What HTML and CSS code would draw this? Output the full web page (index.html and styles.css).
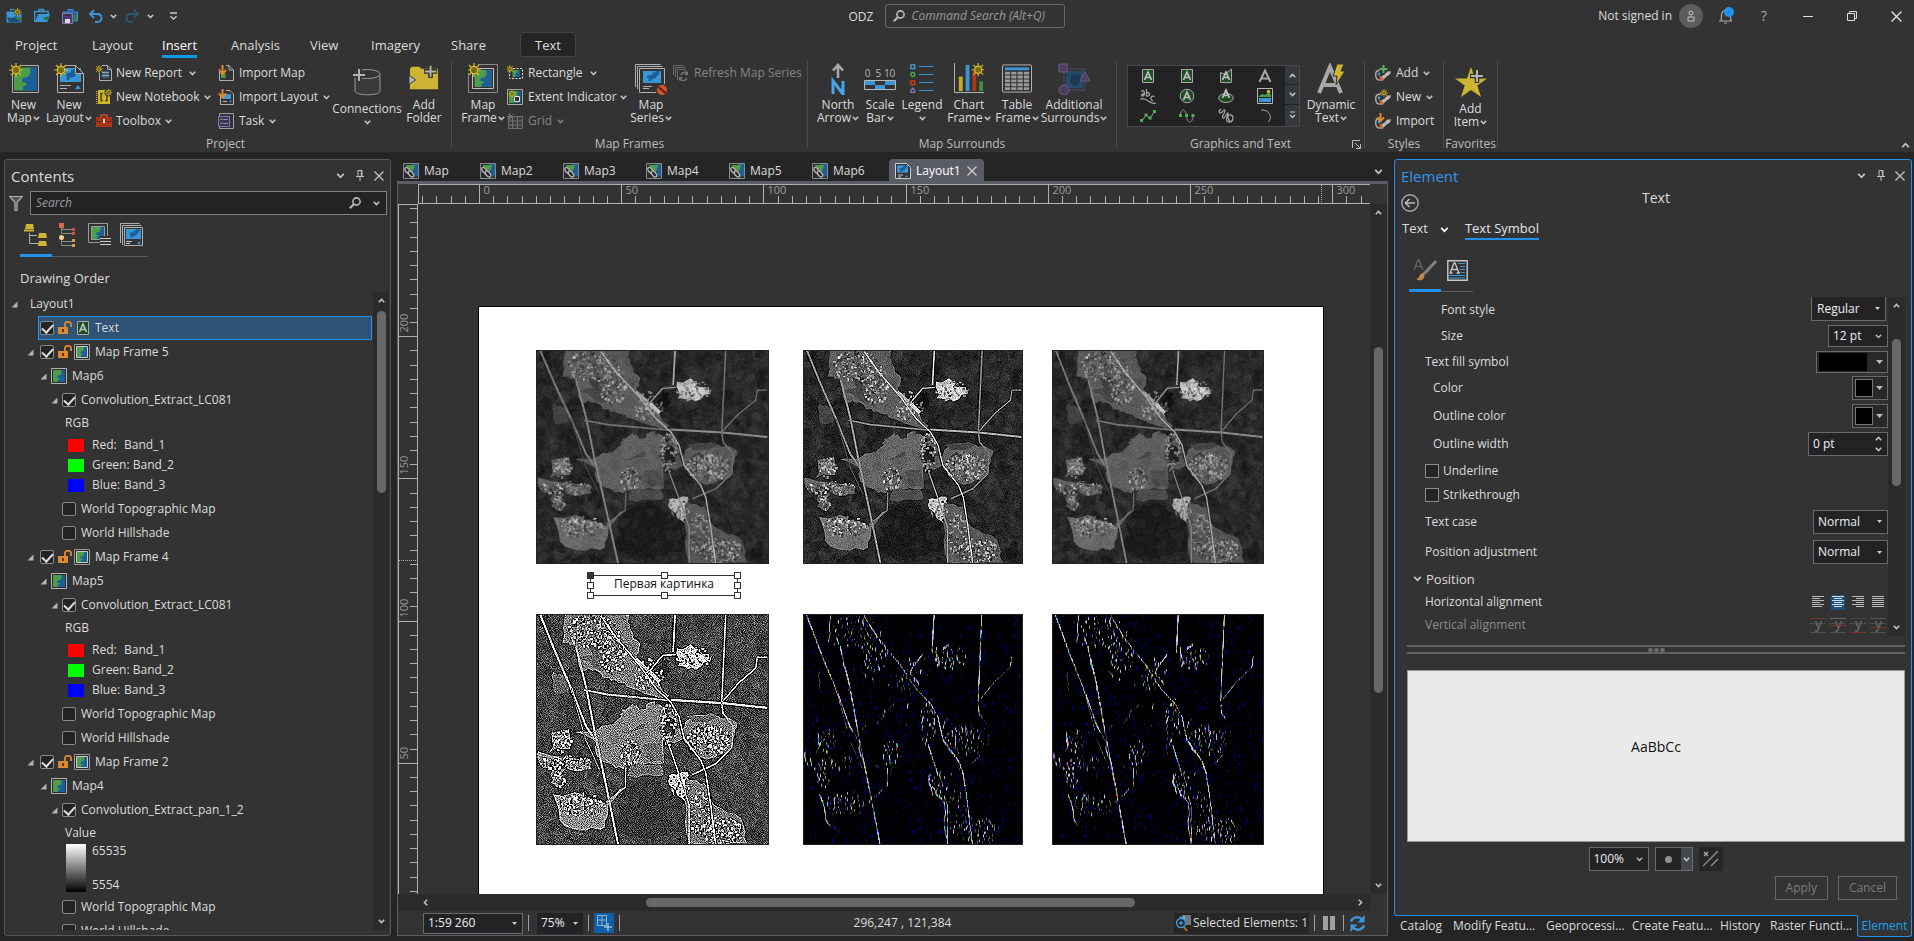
FILE: index.html
```html
<!DOCTYPE html>
<html lang="en">
<head>
<meta charset="utf-8">
<title>ODZ - Layout1</title>
<link rel="stylesheet" href="styles.css">
</head>
<body>
<svg class="defs" aria-hidden="true">
  <symbol id="cv" viewBox="0 0 7 5"><path d="M.8.8 3.5 3.6 6.2.8" fill="none" stroke="currentColor" stroke-width="1.5"/></symbol>
  <symbol id="cv-up" viewBox="0 0 7 5"><path d="M.8 4.2 3.5 1.4 6.2 4.2" fill="none" stroke="currentColor" stroke-width="1.5"/></symbol>
  <symbol id="x" viewBox="0 0 10 10"><path d="M.5.5l9 9M9.500.5l-9 9" fill="none" stroke="currentColor" stroke-width="1.3"/></symbol>
  <symbol id="pin" viewBox="0 0 8 11"><path d="M2 .5h4v6M2 .5v6M0 6.500h8M4 7v4M5.300.5v6" fill="none" stroke="currentColor"/></symbol>
  <symbol id="mag" viewBox="0 0 12 12"><circle cx="7.500" cy="4.500" r="3.600" fill="none" stroke="currentColor" stroke-width="1.600"/><path d="M5 7 .8 11.200" stroke="currentColor" stroke-width="2"/></symbol>
  <symbol id="tri" viewBox="0 0 7 7"><path d="M6.500.5v6h-6z" fill="#b4b4b4"/></symbol>
  <symbol id="sun" viewBox="0 0 14 14"><path d="M7 0v14M0 7h14M2 2l10 10M12 2 2 12" stroke="#d8bc2e" stroke-width="1.200"/><circle cx="7" cy="7" r="3.700" fill="#7d6a10" stroke="#d8bc2e" stroke-width="1.200"/></symbol>
  <symbol id="land" viewBox="0 0 24 24"><path d="M0 0h24v24H0z" fill="#4d9d4b"/><path d="M17 0h7v24H10l-1-4 5-2-3-3-3 1 1-5 6-1 2-4z" fill="#1d5f99"/></symbol>
  <symbol id="sea" viewBox="0 0 24 16"><path d="M0 0h24v16H0z" fill="#3a96d6"/><path d="M13 2h3l1-2h5l-1 5-3 2-1 3-5 1-2 3-3-1 1-4H5l1-3 6-1z" fill="#1d5f99"/></symbol>
  <symbol id="newmap" viewBox="0 0 30 30"><path d="M3.500 2.500h26v27h-26z" fill="#333" stroke="#b0b0b0"/><use href="#land" x="5" y="4" width="23" height="24"/><path d="M3 2h8v8H3z" fill="#333"/><use href="#sun" width="14" height="14"/></symbol>
  <symbol id="newlayout" viewBox="0 0 30 30"><path d="M3.500 2.500h18l8 8v19h-26z" fill="#333" stroke="#b0b0b0"/><use href="#sea" x="6" y="5" width="21" height="14"/><path d="M21.500 2.500v8h8z" fill="#333" stroke="#b0b0b0"/><path d="M6 22.500h11M6 25.500h7" stroke="#b0b0b0"/><path d="m21 26 3-4 3 4z" fill="#3a96d6"/><path d="M3 2h8v8H3z" fill="#333"/><use href="#sun" width="14" height="14"/></symbol>
  <symbol id="mapframe" viewBox="0 0 30 30"><path d="M.5 1.500h29v28H.5z" fill="#333" stroke="#8a8a8a"/><path d="M4.500 5.500h21v20h-21z" fill="#333" stroke="#c0c0c0"/><use href="#land" x="6" y="7" width="18" height="17"/><path d="M0 0h10v10H0z" fill="#333"/><use href="#sun" x="-1" width="14" height="14"/></symbol>
  <symbol id="report" viewBox="0 0 16 16"><path d="M3.500.5h8l4 4v11h-12z" fill="#333" stroke="#b0b0b0"/><path d="M6 6h7v7H6z" fill="#3a5f85"/><path d="M6 7.500h7M6 10.500h7M11.500.5v4h4" stroke="#9ab" fill="none"/><path d="M2 0h4v8H2z" fill="#333"/><use href="#sun" x="-1" y="0" width="8" height="8"/></symbol>
  <symbol id="notebook" viewBox="0 0 16 16"><path d="M2 1h12v14H2z" fill="#d0b42e"/><path d="M7 4.500H5v7h2M9 4.500h2v7H9" fill="none" stroke="#4c4210" stroke-width="1.500"/><path d="M.5 2v13" stroke="#c0a52a" stroke-dasharray="1 1" stroke-width="2"/><circle cx="12.500" cy="3.500" r="4" fill="#333"/><use href="#sun" x="8.500" y="-.5" width="8" height="8"/></symbol>
  <symbol id="toolbox" viewBox="0 0 16 16"><path d="M0 4h16v10H0z" fill="#a83318"/><path d="M5 4V2h6v2" fill="none" stroke="#c0563c" stroke-width="1.400"/><path d="M0 8.500h16" stroke="#732010"/><path d="M7 6h2v4H7z" fill="#ddd"/></symbol>
  <symbol id="impmap" viewBox="0 0 16 16"><path d="M1.500 4v11.500h14V5L11 .5H8" fill="#333" stroke="#b0b0b0"/><path d="M3 8h4l1 5H3z" fill="#4d9d4b"/><path d="M11 .5V5h4" fill="none" stroke="#b0b0b0"/><path d="M4.500 0v8M1 5l3.500 4L8 5" fill="none" stroke="#db8a32" stroke-width="2"/></symbol>
  <symbol id="implay" viewBox="0 0 16 16"><path d="M2.500 7v8.500h13V5L12 1.500H8" fill="#333" stroke="#b0b0b0"/><path d="M5 5h8v5H5z" fill="#3a96d6"/><path d="M5 12.500h4" stroke="#bbb"/><path d="m11 13 1.500-2 1.500 2z" fill="#3a96d6"/><path d="M4.500 0v8M1 4.500 4.500 8.500 8 4.500" fill="none" stroke="#db8a32" stroke-width="2"/></symbol>
  <symbol id="task" viewBox="0 0 16 16"><path d="M1.500 4V.5h14v15h-14V13" fill="none" stroke="#a0a0a0"/><path d="M.5 3.500h11v10H.5z" fill="#3c3350" stroke="#8a73b8"/><path d="M5 6.500h5M5 10.500h5" stroke="#9a86c8"/><path d="m2 6 1 1 1.500-2M2 10l1 1 1.500-2" fill="none" stroke="#4fb04f"/></symbol>
  <symbol id="conn" viewBox="0 0 30 28"><path d="M3 7v16c0 5 25 5 25 0V7" fill="#3a3a3a" stroke="#9a9a9a"/><ellipse cx="15.500" cy="6" rx="12.500" ry="4.500" fill="#333" stroke="#9a9a9a"/><path d="M7 0v14M0 7h14" stroke="#333" stroke-width="5"/><path d="M7 1v12M1 7h12" stroke="#b4b4b4" stroke-width="2"/></symbol>
  <symbol id="folder" viewBox="0 0 32 26"><path d="M1 3l2-2h8l2 2h18v22H1z" fill="#cdb533"/><path d="m0 10 7 5-7 5z" fill="#b4b4b4" stroke="#333"/><path d="M23-1v14M16 6h14" stroke="#333" stroke-width="5"/><path d="M23 0v12M17 6h12" stroke="#b4b4b4" stroke-width="2"/></symbol>
  <symbol id="rect" viewBox="0 0 16 16"><path d="M2.500 3.500h13v10h-13z" fill="none" stroke="#ddd" stroke-dasharray="2 1.500"/><use href="#land" x="5" y="5" width="8" height="7"/><use href="#sun" x="-1" y="0" width="8" height="8"/></symbol>
  <symbol id="extent" viewBox="0 0 16 16"><path d="M.5.500h15v15H.5z" fill="#333" stroke="#a8a8a8"/><use href="#land" x="2" y="2" width="12" height="12"/><path d="M7.500 7.500h5v5h-5z" fill="#333" stroke="#ddd"/><use href="#sun" x="1" y="1" width="8" height="8"/></symbol>
  <symbol id="grid" viewBox="0 0 16 16"><path d="M1.500 3.500h14v12h-14zM1 8h15M1 12h15M5.500 3v13M10.500 3v13" fill="#3c3c3c" stroke="#707070"/><path d="M3 0v7M0 3.500h7M1 1l5 5M6 1 1 6" stroke="#777"/></symbol>
  <symbol id="series" viewBox="0 0 32 32"><path d="M.5 24V1.500h25M2.500 26V3.500h25" fill="none" stroke="#b0b0b0"/><path d="M4.500 5.500h25v24h-25z" fill="#333" stroke="#b0b0b0"/><use href="#sea" x="7" y="8" width="20" height="12"/><path d="M8 23.500h9M8 25.500h6" stroke="#b0b0b0"/><circle cx="27" cy="27" r="6.500" fill="#333"/><circle cx="27" cy="27" r="5" fill="#d4572c"/><path d="m23.500 24 7 6" stroke="#5a1f0c" stroke-width="2"/></symbol>
  <symbol id="refseries" viewBox="0 0 16 16"><path d="M.5 10V.5h10M2.500 12V2.500h10M4.500 15V4.500h8V6" fill="none" stroke="#6a6a6a"/><path d="M14 8a4 4 0 0 0-6 2M7 14a4 4 0 0 0 7-1" fill="none" stroke="#777" stroke-width="1.500"/><path d="M15 6v4h-4zM6 16v-4h4z" fill="#777"/></symbol>
  <symbol id="north" viewBox="0 0 16 32"><path d="M8 2v13M3 7.500 8 2l5 5.500" fill="none" stroke="#a8a8a8" stroke-width="2.600"/><path d="M3 31V18l10 13V18" fill="none" stroke="#45a5e6" stroke-width="3"/></symbol>
  <symbol id="scale" viewBox="0 0 32 30"><path d="M.5 16.500h31v9H.5z" fill="#333" stroke="#b8b8b8"/><path d="M1 17h10v4H1zM21 17h10v4H21zM11 21h10v4H11z" fill="#3a96d6"/></symbol>
  <symbol id="legend" viewBox="0 0 24 30"><path d="M9 3.500h14M9 11.500h14M9 19.500h14M9 27.500h14" stroke="#3a96d6"/><path d="M.8 1.800h3.900v3.900H.8z" fill="none" stroke="#45a5e6" stroke-width="1.300"/><circle cx="2.800" cy="11.500" r="2" fill="none" stroke="#4fb04f" stroke-width="1.300"/><path d="M.8 17.800h3.900v3.900H.8z" fill="#6a2010" stroke="#c8431f" stroke-width="1.300"/><path d="M.8 29.500v-2l2-2.500 2 2.500v2z" fill="none" stroke="#8a73b8" stroke-width="1.300"/></symbol>
  <symbol id="chart" viewBox="0 0 31 31"><path d="M.5 0v30.500H31" fill="none" stroke="#b8b8b8"/><path d="M5 14h4v15H5z" fill="#c8ac28"/><path d="M12 2h4v27h-4z" fill="#3a96d6"/><path d="M19 8h4v21h-4z" fill="#a83a1c"/><path d="M26 19h4v10h-4z" fill="#3f8f3f"/><use href="#sun" x="18" y="0" width="14" height="14"/></symbol>
  <symbol id="table" viewBox="0 0 31 30"><rect x=".5" y="1.500" width="30" height="28" rx="1" fill="#303030" stroke="#b8b8b8"/><path d="M3 4h25v3H3z" fill="#3a96d6"/><path d="M3 10h25M3 14h25M3 18h25M3 22h25M3 26h25" stroke="#999" stroke-width="3" stroke-dasharray="5.400 1.130"/></symbol>
  <symbol id="addl" viewBox="0 0 32 32"><path d="M6 6h21v21H6z" fill="none" stroke="#51476b"/><path d="M8 8h17v17H8z" fill="#264c69"/><path d="m13 12 8-1 3 6-7 6-5-3z" fill="#1b3a54"/><path d="M1 1h8v8H1z" fill="#4a3f60" stroke="#6a5c88"/><path d="m27 9 5 9H22z" fill="#4a3f60" stroke="#6a5c88"/><circle cx="6" cy="27" r="5" fill="#4a3f60" stroke="#6a5c88"/></symbol>
  <symbol id="g1" viewBox="0 0 16 16"><path d="M2.500 1.500h11v13h-11z" fill="#1f4d23" stroke="#a8a8a8"/><path d="M4.500 12 8 4l3.500 8M5.800 9.500h4.400" fill="none" stroke="#c0c0c0" stroke-width="1.700"/></symbol>
  <symbol id="g3" viewBox="0 0 16 16"><path d="M2.500 4.500 6 6l4-2 3.500-3v13.500h-11z" fill="#1f4d23" stroke="#a8a8a8"/><path d="M4.500 12 8 4l3.500 8M5.800 9.500h4.400" fill="none" stroke="#c0c0c0" stroke-width="1.700"/></symbol>
  <symbol id="g4" viewBox="0 0 16 16"><path d="M2.500 14 8 2.500 13.500 14M4.500 10.500h7" fill="none" stroke="#a8a8a8" stroke-width="2"/></symbol>
  <symbol id="g5" viewBox="0 0 16 16"><path d="M1.500 3.500c2-2 3 0 3 2.500-3-.5-4 2-2 2s2-2 2-3M6.500 1v7c4 1 4-4 0-3.500M14.500 8.500c-4-1.500-5 3.500-1.500 4M0 11c5-.5 5 0 8 2s4 2.500 8 2.500" fill="none" stroke="#a8a8a8" stroke-width="1.200"/></symbol>
  <symbol id="g6" viewBox="0 0 16 16"><circle cx="8" cy="8" r="6.800" fill="#1f4d23" stroke="#a8a8a8"/><path d="M4.500 12 8 4l3.500 8M5.800 9.500h4.400" fill="none" stroke="#c0c0c0" stroke-width="1.700"/></symbol>
  <symbol id="g7" viewBox="0 0 16 16"><ellipse cx="8" cy="10" rx="7.300" ry="4.500" fill="#1f4d23" stroke="#a8a8a8"/><path d="M4.500 10 8 2l3.500 8M5.800 7.500h4.400" fill="none" stroke="#c0c0c0" stroke-width="1.700"/></symbol>
  <symbol id="g8" viewBox="0 0 16 16"><path d="M.5.500h15v15H.5z" fill="#232326" stroke="#b8b8b8"/><path d="m2 8 3-2 3 1 4-3 2 3v2H2z" fill="#4d9d4b"/><path d="M2 10h12v4H2z" fill="#3a96d6"/><circle cx="11.500" cy="3.500" r="1.700" fill="#e0b92e"/></symbol>
  <symbol id="g9" viewBox="0 0 16 16"><path d="m2 13 4-6 4 3 5-7" fill="none" stroke="#999"/><path d="M0 11h3v3H0zM4.500 5.500h3v3h-3zM8.500 8.500h3v3h-3zM13 2h3v3h-3z" fill="#4fb04f"/></symbol>
  <symbol id="g10" viewBox="0 0 16 16"><path d="M1 8c1-8 6-8 6.500 0s6 8 6.500 0" fill="none" stroke="#999"/><path d="M0 6h3v3H0zM6 6h3v3H6zM12.500 6h3v3h-3z" fill="#4fb04f"/></symbol>
  <symbol id="g11" viewBox="0 0 16 16"><path d="M3 1C-1 4 2 6 4 4s3-3 3-1-4 6-2 7 4-6 5-5-3 6-1 8 6 1 6-3-5-4-5-1 1 4 4 5" fill="none" stroke="#a8a8a8" stroke-width="1.200"/></symbol>
  <symbol id="g12" viewBox="0 0 16 16"><path d="M4 2c9-1 12 9 7 12" fill="none" stroke="#a8a8a8"/></symbol>
  <symbol id="dyn" viewBox="0 0 30 32"><path d="M3 30 14 4l11 26M7 22h14" fill="none" stroke="#a8a8a8" stroke-width="4"/><path d="M21 1h7l-3 7h4L20 22l1-9h-4z" fill="#cfb42c" stroke="#333"/></symbol>
  <symbol id="palette" viewBox="0 0 16 16"><path d="M6 4C1 4 0 7 1 11s4 3 5 2 0-3 3-3 7-2 6-5" fill="none" stroke="#a8a8a8" stroke-width="1.500"/><path d="m6 14 8-8" stroke="#bbb" stroke-width="3"/><path d="m5 15 3-3" stroke="#c0763a" stroke-width="3"/><circle cx="4" cy="8" r="1.400" fill="#3a96d6"/><circle cx="5" cy="11" r="1.200" fill="#c8431f"/></symbol>
  <symbol id="padd" viewBox="0 0 16 16"><use href="#palette" y="1" width="16" height="16"/><path d="M8.500 0v8M4.500 4h8" stroke="#333" stroke-width="4"/><path d="M8.500 0v8M4.500 4h8" stroke="#58b060" stroke-width="2"/></symbol>
  <symbol id="pnew" viewBox="0 0 16 16"><use href="#palette" y="1" width="16" height="16"/><use href="#sun" x="5" y="0" width="8" height="8"/></symbol>
  <symbol id="pimp" viewBox="0 0 16 16"><use href="#palette" y="1" width="16" height="16"/><path d="M5.500 0v7M2 4.500 5.500 8 9 4.500" fill="none" stroke="#db8a32" stroke-width="2"/></symbol>
  <symbol id="star" viewBox="0 0 32 32"><path d="m16 0 4 11.500h12L22.300 18.500 26 30l-10-7-10 7 3.700-11.500L0 11.500h12z" fill="#cdb533"/><path d="M22 2v14M15 9h14" stroke="#333" stroke-width="4.500"/><path d="M22 3v12M16 9h12" stroke="#b4b4b4" stroke-width="2"/></symbol>
  <symbol id="proj-new" viewBox="0 0 16 16"><path d="M.5 14.500V3.500h15v11z" fill="#3a96d6"/><path d="m1 9 5 1 4-2 5 6H3z" fill="#1d4f7a"/><path d="M4.500 3V1.500h4" fill="none" stroke="#3a96d6"/><path d="M8 9h7v5z" fill="#3f7f42"/><circle cx="11.500" cy="4" r="3.500" fill="#333"/><use href="#sun" x="7.500" y="0" width="8" height="8"/></symbol>
  <symbol id="proj-open" viewBox="0 0 16 16"><path d="M.7 14V3.500h13.500V6M5 3V1.500h4.500V3" fill="none" stroke="#3a96d6" stroke-width="1.400"/><path d="M1 14 4 6h12l-2.500 8z" fill="#3a96d6"/><path d="m9 10 6-2-2 5z" fill="#2d6e38"/></symbol>
  <symbol id="proj-save" viewBox="0 0 16 16"><path d="M1 4h14.500v9H1zM6 3.500v-2h5v2" fill="#1d5f99" stroke="#3a96d6"/><path d="M12 7h3v6h-3z" fill="#3f7f42"/><path d="M.5 5.500h10v10H.5z" fill="#4a3f75" stroke="#8a73b8"/><path d="M3 11h5v4H3z" fill="#ddd"/><path d="M3 6h5v2H3z" fill="#333"/></symbol>
  <symbol id="undo" viewBox="0 0 14 14"><path d="M1 5h7c6 0 6 8 0 8H6M5 1 1 5l4 4" fill="none" stroke="currentColor" stroke-width="1.800"/></symbol>
  <symbol id="chain" viewBox="0 0 16 16"><path d="M.5.500h15v15H.5z" fill="#2a2a2a" stroke="#8a8a8a"/><path d="M9 1h6v12l-3 1z" fill="#1d5f99"/><path d="M2 2h10l-2 7z" fill="#4d9d4b"/><g fill="#2a2a2a" stroke="#b8b8b8" stroke-width="1.300"><ellipse cx="4.500" cy="7.500" rx="2" ry="3.500" transform="rotate(-40 4.500 7.500)"/><ellipse cx="8" cy="11" rx="2" ry="3.500" transform="rotate(-40 8 11)"/></g></symbol>
  <symbol id="laydoc" viewBox="0 0 16 16"><path d="M.5.500h11l4 4v11H.5z" fill="#333" stroke="#ccc"/><use href="#sea" x="2" y="2" width="11" height="8"/><path d="M3 12h5M3 14h3" stroke="#ccc"/><path d="m10 14 1.500-2 1.500 2z" fill="#3a96d6"/></symbol>
  <symbol id="mapi" viewBox="0 0 16 16"><path d="M.5.500h15v15H.5z" fill="#2a2a2a" stroke="#b4b4b4"/><use href="#land" x="2" y="2" width="12" height="12"/></symbol>
  <symbol id="framei" viewBox="0 0 16 16"><path d="M.5.500h15v15H.5z" fill="#2a2a2a" stroke="#9a9a9a"/><path d="M2.500 2.500h11v11h-11z" fill="#333" stroke="#ccc"/><use href="#land" x="3" y="3" width="10" height="10"/></symbol>
  <symbol id="lock" viewBox="0 0 14 14"><path d="M0 6h10v7H0z" fill="#db8a32"/><path d="M7 6V3c0-3 6-3 6 0v3" fill="none" stroke="#db8a32" stroke-width="1.800"/><path d="M4 8h2v3H4z" fill="#5a3408"/></symbol>
  <symbol id="funnel" viewBox="0 0 14 16"><path d="M.8 1.500h12.400L8 7.500V16H6V7.500z" fill="#555" stroke="#b0b0b0" stroke-width="1.200"/></symbol>
  <symbol id="t1" viewBox="0 0 24 24"><path d="M5.500 10v10.500H15M5 12.500h8" fill="none" stroke="#b0b0b0"/><path d="m1 6 1-5h7l1 5zM0 6.500h10v2H0zM14 15l1-5h7l1 5zM14 23l1-5h7l1 5z" fill="#cdb533"/></symbol>
  <symbol id="t2" viewBox="0 0 20 24"><path d="M4 5v1.500h10M3.500 5v5.500H14M3.500 14v4.500H14M3.500 18v4.500H14" fill="none" stroke="#8a8a8a"/><path d="M1 0h5v5H1z" fill="#d9694f"/><path d="M14 5h3v3h-3zM14 9h3v3h-3z" fill="#c8553a"/><circle cx="3.500" cy="14.500" r="2.500" fill="#f0d58a"/><path d="M14 16h3v3h-3zM14 21h3v3h-3z" fill="#d0a050"/></symbol>
  <symbol id="t3" viewBox="0 0 24 24"><path d="M.5.500h19v14M.5.500v19h11" fill="none" stroke="#9a9a9a"/><path d="M3.500 3.500h13v13h-13z" fill="#333" stroke="#9a9a9a"/><use href="#land" x="4" y="4" width="12" height="12"/><path d="M12 13h12v9H12z" fill="#333"/><path d="M12 15.500h11M12 18.500h11M12 21.500h11" stroke="#ccc"/></symbol>
  <symbol id="t4" viewBox="0 0 24 24"><path d="M.5 20V.5h19M2.500 22V2.500h19" fill="none" stroke="#b0b0b0"/><path d="M4.500 4.500h18v18h-18z" fill="#333" stroke="#b0b0b0"/><use href="#sea" x="6" y="6" width="15" height="10"/><path d="M6 18.500h6M6 20.500h4" stroke="#ccc"/><path d="m17 21 2-3 2 3z" fill="#3a96d6"/></symbol>
  <symbol id="brush" viewBox="0 0 24 24"><path d="m1 12 4-10h1l4 10M3 8.500h5" fill="none" stroke="#6a6a6a" stroke-width="1.200"/><path d="M23 3 11 16" stroke="#808080" stroke-width="3"/><path d="M11 15c-5-1-4 6-8 6 4 3 10 1 8-6z" fill="#c0874a"/></symbol>
  <symbol id="atext" viewBox="0 0 21 21"><path d="M.8.800h19.400v19.400H.8z" fill="#333" stroke="#c8c8c8" stroke-width="1.400"/><path d="M3 13 7 3h1l4 10M4.500 9.500h6M2.500 13h3M9.500 13H13" fill="none" stroke="#c8c8c8" stroke-width="1.300"/><path d="M11 3.500h7M13 6.500h5M13 9.500h5M14 12.500h4M2 15.500h16M2 18h16" stroke="#3a96d6"/></symbol>
  <symbol id="al" viewBox="0 0 12 12"><path d="M0 .5h12M0 2.500h8M0 4.500h12M0 6.500h8M0 8.500h12M0 10.500h10" stroke="#b8b8b8"/></symbol>
  <symbol id="ac" viewBox="0 0 12 12"><path d="M0 .5h12M2 2.500h8M0 4.500h12M2 6.500h8M0 8.500h12M2 10.500h8" stroke="#cfe0ee"/></symbol>
  <symbol id="ar" viewBox="0 0 12 12"><path d="M0 .5h12M4 2.500h8M0 4.500h12M4 6.500h8M0 8.500h12M4 10.500h8" stroke="#b8b8b8"/></symbol>
  <symbol id="aj" viewBox="0 0 12 12"><path d="M0 .5h12M0 2.500h12M0 4.500h12M0 6.500h12M0 8.500h12M0 10.500h12" stroke="#b8b8b8"/></symbol>
  <symbol id="va" viewBox="0 0 16 16"><path d="M0 5.500h16" stroke="#666" stroke-dasharray="1 1"/><path d="M0 14.500h16" stroke="#505050"/><path d="m5.500 3 3 7M11.500 3 7.500 13H5" fill="none" stroke="#666" stroke-width="1.500"/></symbol>
  <symbol id="zoomsel" viewBox="0 0 16 16"><path d="M7 0h9v10H7z" fill="#777"/><path d="M9 1v9M5 2l5 3" stroke="#45c5f0" stroke-width="2"/><circle cx="6" cy="8" r="4.500" fill="#2a2a2a" stroke="#3a96d6" stroke-width="1.500"/><path d="M6 6v4M4 8h4" stroke="#3a96d6" stroke-width="1.400"/><path d="m9 12 3 4" stroke="#a8713a" stroke-width="2"/></symbol>
  <symbol id="refresh" viewBox="0 0 18 18"><path d="M2 7a7 7 0 0 1 12-2M16 11a7 7 0 0 1-12 2" fill="none" stroke="#3a96d6" stroke-width="2.600"/><path d="M16.500 0v8H9zM1.500 18v-8H9z" fill="#3a96d6"/></symbol>
</svg>

<header class="titlebar">
  <div class="qat">
    <button aria-label="New project"><svg width="16" height="16"><use href="#proj-new"/></svg></button>
    <button aria-label="Open project"><svg width="16" height="16"><use href="#proj-open"/></svg></button>
    <button aria-label="Save project"><svg width="16" height="16"><use href="#proj-save"/></svg></button>
    <button class="undo" aria-label="Undo"><svg width="14" height="14"><use href="#undo"/></svg></button>
    <button aria-label="Undo list"><svg class="c"><use href="#cv"/></svg></button>
    <button class="redo" aria-label="Redo"><svg width="14" height="14"><use href="#undo"/></svg></button>
    <button aria-label="Redo list"><svg class="c"><use href="#cv"/></svg></button>
    <button aria-label="Customize toolbar"><svg width="9" height="9" viewBox="0 0 9 9"><path d="M1 1h7M1.500 4.200l3 3 3-3" fill="none" stroke="#ccc" stroke-width="1.300"/></svg></button>
  </div>
  <div class="titlemid">
    <span>ODZ</span>
    <label class="cmd"><svg width="12" height="12"><use href="#mag"/></svg><input type="text" placeholder="Command Search (Alt+Q)" aria-label="Command Search"></label>
  </div>
  <div class="account">
    <span>Not signed in</span>
    <button class="avatar" aria-label="Account"><svg width="8" height="12" viewBox="0 0 8 12"><circle cx="4" cy="3" r="2" fill="none" stroke="#c4c4c4"/><path d="M1 11V7h6v4z" fill="none" stroke="#c4c4c4"/></svg></button>
    <button class="bell" aria-label="Notifications"><svg width="16" height="18" viewBox="0 0 16 18"><path d="M1 14h13M3 14c1-4-1-10 5-11s4 7 5 11M6 16h3" fill="none" stroke="#aaa" stroke-width="1.200"/><circle cx="11" cy="5" r="5" fill="#2490ee"/></svg></button>
    <button class="help" aria-label="Help">?</button>
    <button aria-label="Minimize"><svg width="10" height="10" viewBox="0 0 10 10"><path d="M0 5.500h10" stroke="#ddd"/></svg></button>
    <button aria-label="Restore"><svg width="10" height="10" viewBox="0 0 10 10"><path d="M.5 2.500h7v7h-7zM2.500 2V.500h7v7H8" fill="none" stroke="#ddd"/></svg></button>
    <button aria-label="Close"><svg width="11" height="11"><use href="#x"/></svg></button>
  </div>
</header>

<nav class="tabs">
  <a href="#">Project</a><a href="#">Layout</a><a href="#" class="on">Insert</a><a href="#">Analysis</a><a href="#">View</a><a href="#">Imagery</a><a href="#">Share</a><a href="#" class="ctx">Text</a>
</nav>

<section class="ribbon">
  <div class="group">
    <div class="tools g-project">
      <button class="big"><svg><use href="#newmap"/></svg><span>New<br>Map<svg class="c"><use href="#cv"/></svg></span></button>
      <button class="big"><svg><use href="#newlayout"/></svg><span>New<br>Layout<svg class="c"><use href="#cv"/></svg></span></button>
      <div class="stack inset">
        <button><svg class="s"><use href="#report"/></svg>New Report<svg class="c far"><use href="#cv"/></svg></button>
        <button><svg class="s"><use href="#notebook"/></svg>New Notebook<svg class="c"><use href="#cv"/></svg></button>
        <button><svg class="s"><use href="#toolbox"/></svg>Toolbox<svg class="c"><use href="#cv"/></svg></button>
      </div>
      <div class="stack">
        <button><svg class="s"><use href="#impmap"/></svg>Import Map</button>
        <button><svg class="s"><use href="#implay"/></svg>Import Layout<svg class="c"><use href="#cv"/></svg></button>
        <button><svg class="s"><use href="#task"/></svg>Task<svg class="c"><use href="#cv"/></svg></button>
      </div>
      <button class="big low"><svg><use href="#conn"/></svg><span>Connections<br><svg class="c"><use href="#cv"/></svg></span></button>
      <button class="big"><svg><use href="#folder"/></svg><span>Add<br>Folder</span></button>
    </div>
    <div class="caption">Project</div>
  </div>
  <div class="group">
    <div class="tools g-frames">
      <button class="big"><svg><use href="#mapframe"/></svg><span>Map<br>Frame<svg class="c"><use href="#cv"/></svg></span></button>
      <div class="stack">
        <button><svg class="s"><use href="#rect"/></svg>Rectangle<svg class="c far"><use href="#cv"/></svg></button>
        <button><svg class="s"><use href="#extent"/></svg>Extent Indicator<svg class="c near"><use href="#cv"/></svg></button>
        <button class="off"><svg class="s"><use href="#grid"/></svg>Grid<svg class="c"><use href="#cv"/></svg></button>
      </div>
      <button class="big"><svg class="w32"><use href="#series"/></svg><span>Map<br>Series<svg class="c"><use href="#cv"/></svg></span></button>
      <div class="stack"><button class="off"><svg class="s"><use href="#refseries"/></svg>Refresh Map Series</button></div>
    </div>
    <div class="caption">Map Frames</div>
  </div>
  <div class="group">
    <div class="tools g-surrounds">
      <button class="big"><svg class="w32"><use href="#north"/></svg><span>North<br>Arrow<svg class="c"><use href="#cv"/></svg></span></button>
      <button class="big scalebar"><i>0&nbsp; 5 10</i><svg class="w32"><use href="#scale"/></svg><span>Scale<br>Bar<svg class="c"><use href="#cv"/></svg></span></button>
      <button class="big"><svg><use href="#legend"/></svg><span>Legend<br><svg class="c"><use href="#cv"/></svg></span></button>
      <button class="big"><svg><use href="#chart"/></svg><span>Chart<br>Frame<svg class="c"><use href="#cv"/></svg></span></button>
      <button class="big"><svg><use href="#table"/></svg><span>Table<br>Frame<svg class="c"><use href="#cv"/></svg></span></button>
      <button class="big"><svg class="w32"><use href="#addl"/></svg><span>Additional<br>Surrounds<svg class="c"><use href="#cv"/></svg></span></button>
    </div>
    <div class="caption">Map Surrounds</div>
  </div>
  <div class="group">
    <div class="tools g-graphics">
      <div class="gallery">
        <div class="cells">
          <button aria-label="Rectangle text"><svg class="s"><use href="#g1"/></svg></button><button aria-label="Rectangle text 2"><svg class="s"><use href="#g1"/></svg></button><button aria-label="Polygon text"><svg class="s"><use href="#g3"/></svg></button><button aria-label="Straight text"><svg class="s"><use href="#g4"/></svg></button>
          <button aria-label="Curved text"><svg class="s"><use href="#g5"/></svg></button><button aria-label="Circle text"><svg class="s"><use href="#g6"/></svg></button><button aria-label="Ellipse text"><svg class="s"><use href="#g7"/></svg></button><button aria-label="Picture"><svg class="s"><use href="#g8"/></svg></button>
          <button aria-label="Line"><svg class="s"><use href="#g9"/></svg></button><button aria-label="Curve"><svg class="s"><use href="#g10"/></svg></button><button aria-label="Freehand"><svg class="s"><use href="#g11"/></svg></button><button aria-label="Arc"><svg class="s"><use href="#g12"/></svg></button>
        </div>
        <div class="gscroll">
          <button aria-label="Up"><svg class="c"><use href="#cv-up"/></svg></button>
          <button aria-label="Down"><svg class="c"><use href="#cv"/></svg></button>
          <button aria-label="More"><svg width="7" height="8" viewBox="0 0 7 8"><path d="M1 1h5M1 4l2.500 2.500L6 4" fill="none" stroke="#ccc" stroke-width="1.200"/></svg></button>
        </div>
      </div>
      <button class="big"><svg class="w32"><use href="#dyn"/></svg><span>Dynamic<br>Text<svg class="c"><use href="#cv"/></svg></span></button>
    </div>
    <div class="caption">Graphics and Text<button class="launch" aria-label="Options"><svg width="9" height="9" viewBox="0 0 9 9"><path d="M.5 8V.5H8M3 3l5 5M8.500 4v4.500H4" fill="none" stroke="#bbb"/></svg></button></div>
  </div>
  <div class="group">
    <div class="tools g-styles">
      <div class="stack">
        <button><svg class="s"><use href="#padd"/></svg>Add<svg class="c"><use href="#cv"/></svg></button>
        <button><svg class="s"><use href="#pnew"/></svg>New<svg class="c"><use href="#cv"/></svg></button>
        <button><svg class="s"><use href="#pimp"/></svg>Import</button>
      </div>
    </div>
    <div class="caption">Styles</div>
  </div>
  <div class="group">
    <div class="tools g-fav">
      <button class="big low"><svg class="w32"><use href="#star"/></svg><span>Add<br>Item<svg class="c"><use href="#cv"/></svg></span></button>
    </div>
    <div class="caption">Favorites</div>
  </div>
  <button class="collapse" aria-label="Collapse ribbon"><svg class="c"><use href="#cv-up"/></svg></button>
</section>

<main class="work">
  <aside class="panel contents">
    <div class="phead"><h2>Contents</h2><button aria-label="Menu"><svg class="c"><use href="#cv"/></svg></button><button aria-label="Pin"><svg width="8" height="11"><use href="#pin"/></svg></button><button aria-label="Close"><svg width="10" height="10"><use href="#x"/></svg></button></div>
    <div class="filter">
      <svg width="14" height="16"><use href="#funnel"/></svg>
      <label class="find"><input type="text" placeholder="Search" aria-label="Search"><svg width="12" height="12"><use href="#mag"/></svg><svg class="c"><use href="#cv"/></svg></label>
    </div>
    <div class="views">
      <button class="on" aria-label="List by drawing order"><svg width="24" height="24"><use href="#t1"/></svg></button><button aria-label="List by element type"><svg width="20" height="24"><use href="#t2"/></svg></button><button aria-label="List by map frame"><svg width="24" height="24"><use href="#t3"/></svg></button><button aria-label="List map series"><svg width="24" height="24"><use href="#t4"/></svg></button>
    </div>
    <h3>Drawing Order</h3>
    <div class="treebox">
      <div class="tree">
        <div class="row l0"><svg class="t"><use href="#tri"/></svg><span>Layout1</span></div>
        <label class="row l1 sel"><input type="checkbox" checked><svg class="k"><use href="#lock"/></svg><svg class="s"><use href="#g1"/></svg><span>Text</span></label>
        <label class="row l2"><svg class="t"><use href="#tri"/></svg><input type="checkbox" checked><svg class="k"><use href="#lock"/></svg><svg class="s"><use href="#framei"/></svg><span>Map Frame 5</span></label>
        <div class="row l3"><svg class="t"><use href="#tri"/></svg><svg class="s"><use href="#mapi"/></svg><span>Map6</span></div>
        <label class="row l4"><svg class="t"><use href="#tri"/></svg><input type="checkbox" checked><span>Convolution_Extract_LC081</span></label>
        <div class="row l5">RGB</div>
        <div class="bands"><i class="r"></i><span>Red:</span><span>Band_1</span><i class="g"></i><span>Green: Band_2</span><i class="b"></i><span>Blue:</span><span>Band_3</span></div>
        <label class="row l6"><input type="checkbox"><span>World Topographic Map</span></label>
        <label class="row l6"><input type="checkbox"><span>World Hillshade</span></label>
        <label class="row l2"><svg class="t"><use href="#tri"/></svg><input type="checkbox" checked><svg class="k"><use href="#lock"/></svg><svg class="s"><use href="#framei"/></svg><span>Map Frame 4</span></label>
        <div class="row l3"><svg class="t"><use href="#tri"/></svg><svg class="s"><use href="#mapi"/></svg><span>Map5</span></div>
        <label class="row l4"><svg class="t"><use href="#tri"/></svg><input type="checkbox" checked><span>Convolution_Extract_LC081</span></label>
        <div class="row l5">RGB</div>
        <div class="bands"><i class="r"></i><span>Red:</span><span>Band_1</span><i class="g"></i><span>Green: Band_2</span><i class="b"></i><span>Blue:</span><span>Band_3</span></div>
        <label class="row l6"><input type="checkbox"><span>World Topographic Map</span></label>
        <label class="row l6"><input type="checkbox"><span>World Hillshade</span></label>
        <label class="row l2"><svg class="t"><use href="#tri"/></svg><input type="checkbox" checked><svg class="k"><use href="#lock"/></svg><svg class="s"><use href="#framei"/></svg><span>Map Frame 2</span></label>
        <div class="row l3"><svg class="t"><use href="#tri"/></svg><svg class="s"><use href="#mapi"/></svg><span>Map4</span></div>
        <label class="row l4"><svg class="t"><use href="#tri"/></svg><input type="checkbox" checked><span>Convolution_Extract_pan_1_2</span></label>
        <div class="row l5">Value</div>
        <div class="ramp"><i></i><div><span>65535</span><span>5554</span></div></div>
        <label class="row l6"><input type="checkbox"><span>World Topographic Map</span></label>
        <label class="row l6"><input type="checkbox"><span>World Hillshade</span></label>
      </div>
      <div class="vbar"><svg class="c"><use href="#cv-up"/></svg><b class="thumb-tree"></b><svg class="c end"><use href="#cv"/></svg></div>
    </div>
  </aside>

  <section class="doc">
    <div class="doctabs">
      <a href="#" class="first"><svg class="s"><use href="#chain"/></svg>Map</a><a href="#"><svg class="s"><use href="#chain"/></svg>Map2</a><a href="#"><svg class="s"><use href="#chain"/></svg>Map3</a><a href="#"><svg class="s"><use href="#chain"/></svg>Map4</a><a href="#"><svg class="s"><use href="#chain"/></svg>Map5</a><a href="#"><svg class="s"><use href="#chain"/></svg>Map6</a><a href="#" class="on"><svg class="s"><use href="#laydoc"/></svg>Layout1<svg width="10" height="10"><use href="#x"/></svg></a>
      <button aria-label="All views"><svg class="c"><use href="#cv"/></svg></button>
    </div>
    <div class="docbody">
      <div class="corner"></div>
      <svg class="hruler" id="hruler"></svg>
      <div class="cornerr"></div>
      <svg class="vruler" id="vruler"></svg>
      <div class="view">
        <div class="page">
          <canvas class="f1" width="233" height="214"></canvas>
          <canvas class="f2" width="220" height="214"></canvas>
          <canvas class="f3" width="212" height="214"></canvas>
          <canvas class="f4" width="233" height="231"></canvas>
          <canvas class="f5" width="220" height="231"></canvas>
          <canvas class="f6" width="212" height="231"></canvas>
          <div class="textel">Первая картинка<i class="h nw"></i><i class="h n"></i><i class="h ne"></i><i class="h w"></i><i class="h e"></i><i class="h sw"></i><i class="h so"></i><i class="h se"></i></div>
        </div>
      </div>
      <div class="vbar"><svg class="c"><use href="#cv-up"/></svg><b class="thumb-view"></b><svg class="c end"><use href="#cv"/></svg></div>
      <div class="hbar"><svg class="c left"><use href="#cv"/></svg><b></b><svg class="c right"><use href="#cv"/></svg></div>
    </div>
    <div class="status">
      <select class="scale" aria-label="Scale"><option>1:59 260</option></select><i class="bar"></i>
      <select class="zoom" aria-label="Zoom"><option>75%</option></select><i class="bar"></i>
      <button class="guides" aria-label="Guides"><svg width="16" height="18" viewBox="0 0 16 18"><path d="M1.500 1.500h9v10h-9zM6 1v10M1 6h9" fill="none" stroke="#8fb3d0"/><path d="M12 9v8M8 13h8" stroke="#d4e4f2"/></svg></button><i class="bar"></i>
      <span class="coord">296,247 , 121,384</span>
      <span class="selcount"><svg class="s"><use href="#zoomsel"/></svg>Selected Elements: 1</span><i class="bar"></i>
      <button class="pause" aria-label="Pause"><svg width="12" height="14" viewBox="0 0 12 14"><path d="M0 0h5v14H0zM7 0h5v14H7z" fill="#a0a0a0"/></svg></button><i class="bar"></i>
      <button aria-label="Refresh"><svg width="17" height="17"><use href="#refresh"/></svg></button>
    </div>
  </section>

  <section class="side">
    <div class="panel element">
      <div class="phead"><h2>Element</h2><button aria-label="Menu"><svg class="c"><use href="#cv"/></svg></button><button aria-label="Pin"><svg width="8" height="11"><use href="#pin"/></svg></button><button aria-label="Close"><svg width="10" height="10"><use href="#x"/></svg></button></div>
      <div class="titlerow"><button aria-label="Back"><svg width="18" height="18" viewBox="0 0 18 18"><circle cx="9" cy="9" r="8.200" fill="none" stroke="#a8a8a8" stroke-width="1.400"/><path d="M14 9H5M8.500 5 4.500 9l4 4" fill="none" stroke="#b8b8b8" stroke-width="1.600"/></svg></button><h3>Text</h3></div>
      <div class="subtabs"><a href="#">Text</a><svg class="c"><use href="#cv"/></svg><a href="#" class="on">Text Symbol</a></div>
      <div class="views two"><button class="on" aria-label="General"><svg width="24" height="24"><use href="#brush"/></svg></button><button aria-label="Formatting"><svg width="21" height="21"><use href="#atext"/></svg></button></div>
      <div class="propbox">
        <div class="props">
          <div class="p h25 in3"><label for="fs">Font style</label><select id="fs" class="dd cut"><option>Regular</option></select></div>
          <div class="p h28 in3"><label for="sz">Size</label><select id="sz" class="dd size"><option>12 pt</option></select></div>
          <div class="p h24 in1"><span>Text fill symbol</span><button class="fill" aria-label="Text fill symbol"><b></b></button></div>
          <div class="p h28 in2"><span>Color</span><button class="color" aria-label="Color"><b></b></button></div>
          <div class="p h28 in2"><span>Outline color</span><button class="color" aria-label="Outline color"><b></b></button></div>
          <div class="p h28 in2"><label for="ow">Outline width</label><div class="spin"><input id="ow" type="text" value="0 pt"><div><svg class="c"><use href="#cv-up"/></svg><svg class="c"><use href="#cv"/></svg></div></div></div>
          <div class="p h25 in1"><label class="chk"><input type="checkbox">Underline</label></div>
          <div class="p h23 in1"><label class="chk"><input type="checkbox">Strikethrough</label></div>
          <div class="p h31 in1"><label for="tc">Text case</label><select id="tc" class="dd"><option>Normal</option></select></div>
          <div class="p h30 in1"><label for="pa">Position adjustment</label><select id="pa" class="dd"><option>Normal</option></select></div>
          <div class="p h23 sec"><svg class="c"><use href="#cv"/></svg><span>Position</span></div>
          <div class="p h24 in1"><span>Horizontal alignment</span><div class="al"><button aria-label="Left"><svg><use href="#al"/></svg></button><button class="on" aria-label="Center"><svg><use href="#ac"/></svg></button><button aria-label="Right"><svg><use href="#ar"/></svg></button><button aria-label="Justify"><svg><use href="#aj"/></svg></button></div></div>
          <div class="p h22 in1 dim"><span>Vertical alignment</span><div class="al va"><button disabled aria-label="Top"><svg viewBox="0 0 16 16"><use href="#va"/><path d="M0 .5h16" stroke="#7a3428"/></svg></button><button disabled aria-label="Middle"><svg viewBox="0 0 16 16"><use href="#va"/><path d="M0 .5h16" stroke="#666"/><path d="M0 7.500h16" stroke="#7a3428"/></svg></button><button disabled aria-label="Baseline"><svg viewBox="0 0 16 16"><use href="#va"/><path d="M0 .5h16" stroke="#444"/><path d="M0 14.500h16" stroke="#7a3428"/></svg></button><button disabled aria-label="Bottom"><svg viewBox="0 0 16 16"><use href="#va"/><path d="M0 .5h16" stroke="#555"/><path d="M0 9.500h16" stroke="#7a3428"/></svg></button></div></div>
        </div>
        <div class="vbar"><svg class="c"><use href="#cv-up"/></svg><b class="thumb-props"></b><svg class="c end"><use href="#cv"/></svg></div>
      </div>
      <div class="splitter"><i></i><i></i><i></i></div>
      <div class="preview">AaBbCc</div>
      <div class="ptools">
        <select class="dd pct" aria-label="Preview zoom"><option>100%</option></select>
        <button class="dot" aria-label="Preview shape"><i></i><span><svg class="c"><use href="#cv"/></svg></span></button>
        <button class="eye" aria-label="Variables"><svg width="16" height="16" viewBox="0 0 16 16"><path d="M0 15 15 0M8 15l7-7" stroke="#999" stroke-width="1.200"/><path d="m1 1 4 4m0-4L1 5" stroke="#aaa" stroke-width="1.300"/></svg></button>
      </div>
      <div class="actions"><button disabled>Apply</button><button disabled>Cancel</button></div>
    </div>
    <nav class="dock"><a href="#">Catalog</a><a href="#">Modify Featu...</a><a href="#">Geoprocessi...</a><a href="#">Create Featu...</a><a href="#">History</a><a href="#">Raster Functi...</a><a href="#" class="on">Element</a></nav>
  </section>
</main>
<script src="app.js"></script>
</body>
</html>
```
FILE: styles.css
```css
:root {
  --bg: #333333;
  --dark: #252525;
  --field: #232326;
  --line: #6a6a6a;
  --blue: #2490ee;
  --text: #dcdcdc;
  --down: url("data:image/svg+xml,%3Csvg xmlns='http://www.w3.org/2000/svg' width='7' height='5'%3E%3Cpath d='M.8.8 3.5 3.6 6.2.8' fill='none' stroke='%23bbb' stroke-width='1.4'/%3E%3C/svg%3E");
  --drop: url("data:image/svg+xml,%3Csvg xmlns='http://www.w3.org/2000/svg' width='7' height='4'%3E%3Cpath d='M0 0h7L3.500 4z' fill='%23bbb'/%3E%3C/svg%3E");
  --dropsmall: url("data:image/svg+xml,%3Csvg xmlns='http://www.w3.org/2000/svg' width='5' height='3'%3E%3Cpath d='M0 0h5L2.500 3z' fill='%23ccc'/%3E%3C/svg%3E");
}
* { box-sizing: border-box; }
html, body { height: 100%; }
body {
  margin: 0;
  display: flex;
  flex-direction: column;
  background: var(--dark);
  color: var(--text);
  font: 12px/16px "Open Sans", "Noto Sans", sans-serif;
  overflow: hidden;
}
button, input, select { font: inherit; color: inherit; margin: 0; }
button { background: none; border: 0; padding: 0; display: flex; align-items: center; justify-content: center; white-space: nowrap; }
a { color: inherit; text-decoration: none; white-space: nowrap; }
h2, h3 { margin: 0; font-weight: 400; }
svg { display: block; flex: none; }
.defs { position: absolute; width: 0; height: 0; }
.c { width: 7px; height: 5px; color: #c4c4c4; }
.s { width: 16px; height: 16px; }
select { appearance: none; border: 1px solid var(--line); background: var(--field) var(--dropsmall) no-repeat right 5px center; border-radius: 0; padding: 0 4px; color: #eee; }

.titlebar { height: 32px; display: grid; grid-template-columns: 1fr auto 1fr; background: var(--bg); }
.qat { display: grid; grid-template-columns: 28px 28px 28px 23px 13px 24px 13px 32px; justify-content: start; }
.undo { color: #3a96d6; }
.redo { color: #2c5672; }
.redo svg { transform: scaleX(-1); }
.titlemid { display: flex; align-items: flex-start; gap: 12px; padding: 4px 0 0 0; }
.titlemid span { line-height: 25px; }
.cmd { display: flex; align-items: center; gap: 6px; width: 180px; height: 24px; padding-left: 7px; border: 1px solid #666; border-radius: 3px; color: #bbb; }
.cmd input { flex: 1; min-width: 0; padding: 0; border: 0; background: none; font-style: italic; }
input::placeholder { color: #9a9a9a; opacity: 1; }
.account { display: flex; justify-content: flex-end; align-items: center; }
.account > span { margin-right: 7px; }
.account button { width: 44px; height: 24px; }
.account .avatar { width: 24px; height: 24px; border-radius: 12px; background: #5c5c5c; margin-right: 7px; }
.account .bell { width: 32px; }
.account .help { font-size: 14px; color: #aaa; }
.account button:last-child { margin-right: -4px; }

.tabs { height: 29px; display: grid; grid-template-columns: 77px 70px 69px 79px 61px 80px 69px auto; justify-content: start; padding-left: 15px; background: var(--bg); font-size: 13px; line-height: 26px; }
.tabs a { justify-self: start; height: 26px; }
.tabs .on { border-bottom: 3px solid #0e9bea; color: #fff; }
.tabs .ctx { width: 56px; height: 25px; line-height: 24px; border: 1px solid #444; border-radius: 3px; background: #252525; text-align: center; }

.ribbon { height: 91px; flex: none; display: flex; background: var(--bg); }
.group { display: flex; flex-direction: column; padding-right: 1px; background: linear-gradient(#4c4c4c, #4c4c4c) no-repeat right top / 1px 87px; }
.tools { flex: 1; display: grid; align-items: start; }
.g-project { grid-template-columns: 47px 44px 127px 115px 68px 46px; padding-right: 4px; }
.g-frames { grid-template-columns: 48px 122px 44px 130px; padding: 0 4px 0 7px; }
.g-surrounds { grid-template-columns: 44px 40px 44px 50px 46px 68px; padding: 0 8px 0 8px; }
.g-graphics { grid-template-columns: 173px 1fr; padding: 0 2px 0 10px; width: 247px; }
.g-styles { width: 78px; padding-left: 10px; }
.g-fav { width: 53px; }
.caption { position: relative; height: 16px; text-align: center; color: #bdbdbd; line-height: 16px; }
.launch { position: absolute; right: 3px; top: 4px; }
.stack { display: grid; grid-auto-rows: 24px; }
.inset { padding-left: 5px; }
.stack button { justify-content: flex-start; gap: 5px; }
.inset button { gap: 4px; }
.stack .far { margin-left: 3px; }
.stack .near { margin-left: -2px; }
.off { color: #858585; }
.off .c { color: #858585; }
.big { flex-direction: column; justify-content: flex-start; gap: 5px; height: 68px; padding-top: 2px; line-height: 13px; }
.big > svg { width: 30px; height: 30px; }
.big > svg.w32 { width: 32px; height: 32px; margin: 0 0 -2px; }
.big.low { padding-top: 6px; }
.big span { display: block; text-align: center; }
.big span .c { display: inline-block; margin-left: 1px; vertical-align: 1px; }
.scalebar { position: relative; }
.scalebar i { position: absolute; top: 6px; left: 4px; width: 32px; font-size: 10px; line-height: 12px; font-style: normal; color: #b8b8b8; text-align: center; }
.gallery { margin-top: 4px; height: 62px; display: flex; border: 1px solid #4a4a4e; background: #232326; }
.cells { flex: 1; display: grid; grid-template-columns: repeat(4, 1fr); grid-auto-rows: 20px; }
.gscroll { width: 14px; display: grid; gap: 1px; }
.gscroll button { background: #35383d; }
.collapse { margin-left: auto; align-self: flex-end; padding: 0 4px 4px 0; }
.collapse .c { width: 9px; height: 6px; }

.work { flex: 1; min-height: 0; display: flex; padding: 7px 2px 5px 4px; gap: 6px; }
.panel { background: var(--bg); border: 1px solid #55575f; border-radius: 3px; display: flex; flex-direction: column; min-height: 0; }
.phead { display: flex; align-items: center; height: 31px; padding: 0 2px 0 6px; }
.phead h2 { flex: 1; font-size: 15px; line-height: 20px; }
.phead button { width: 19px; height: 16px; color: #c4c4c4; }
.phead .c { width: 9px; height: 6px; }
.contents { width: 387px; flex: none; }
.filter { display: flex; align-items: center; gap: 7px; padding: 0 3px 0 4px; }
.find { flex: 1; height: 24px; display: flex; align-items: center; gap: 12px; border: 1px solid #808080; background: var(--field); padding: 0 6px 0 5px; color: #b8b8b8; }
.find input { flex: 1; min-width: 0; border: 0; padding: 0; background: none; font-style: italic; }
.views { display: grid; grid-template-columns: repeat(4, 32px); margin: 8px 0 0 15px; width: 128px; border-bottom: 1px solid #5c5c5c; }
.views.two { grid-template-columns: repeat(2, 32px); width: 64px; margin: 18px 0 0 14px; }
.views button { height: 34px; padding-bottom: 7px; border-bottom: 3px solid transparent; margin-bottom: -1px; }
.views .on { border-color: var(--blue); }
.contents h3 { font-size: 13px; line-height: 18px; padding: 12px 15px 5px; font-weight: 500; }
.treebox { flex: 1; min-height: 0; display: flex; margin: 0 1px 5px 0; }
.tree { flex: 1; overflow: hidden; padding-right: 1px; }
.row { display: flex; align-items: center; height: 24px; gap: 4px; }
.row > span { margin-left: 1px; }
.t { width: 7px; height: 7px; }
.k { width: 14px; height: 14px; }
.l0 { padding-left: 6px; gap: 11px; }
.l1 { margin-left: 33px; padding-left: 1px; border: 1px solid var(--blue); background: #2f5275; }
.l1 > .s { margin: 0 -1px; }
.l2 { padding-left: 22px; gap: 4px; }
.l2 input { margin-left: 2px; }
.l2 > .s { margin-left: -2px; }
.l3 { padding-left: 35px; }
.l4 { padding-left: 46px; }
.l5 { padding-left: 60px; height: 22px; }
.l6 { padding-left: 57px; }
input[type=checkbox] { appearance: none; width: 14px; height: 14px; flex: none; border: 1px solid #8a8a8a; border-radius: 2px; background: #232326; display: grid; place-items: start center; }
input[type=checkbox]:checked::before { content: ""; width: 5px; height: 9px; border: solid #ddd; border-width: 0 2px 2px 0; transform: rotate(42deg); }
.bands { display: grid; grid-template-columns: 24px 32px 1fr; grid-auto-rows: 20px; padding: 1px 0 2px 63px; line-height: 20px; align-items: center; }
.bands i { width: 16px; height: 13px; }
.bands .g + span { grid-column: span 2; }
.r { background: #f00; }
.g { background: #0f0; }
.b { background: #00f; }
.ramp { display: flex; gap: 6px; height: 51px; padding: 0 0 3px 61px; }
.ramp i { width: 20px; background: linear-gradient(#fff, #000); }
.ramp div { display: flex; flex-direction: column; justify-content: space-between; line-height: 14px; }
.vbar { width: 16px; background: #2b2b2b; display: flex; flex-direction: column; align-items: center; padding: 6px 0; }
.vbar b { width: 9px; border-radius: 5px; background: #686868; }
.vbar .end { margin-top: auto; }
.thumb-tree { height: 29%; margin-top: 8px; }
.thumb-view { height: 51%; margin-top: 132px; }
.thumb-props { height: 45%; margin-top: 31px; }

.doc { flex: 1; min-width: 0; display: flex; flex-direction: column; }
.doctabs { height: 22px; display: flex; }
.doctabs a { width: 83px; display: flex; align-items: center; gap: 5px; padding-left: 6px; padding-top: 2px; }
.doctabs .first { width: 77px; }
.doctabs .on { width: 95px; background: #5a5c66; border-radius: 4px 4px 0 0; color: #fff; }
.doctabs .on svg:last-child { margin-left: auto; margin-right: 7px; color: #ccc; }
.doctabs button { margin: 4px 5px 0 auto; }
.doctabs .c { width: 9px; height: 6px; }
.docbody { flex: 1; min-height: 0; display: grid; grid-template-columns: 20px 1fr 17px; grid-template-rows: 20px 1fr 17px; border: solid #5a5c66; border-width: 3px 1px 0; background: var(--bg); }
.hruler, .vruler { width: 100%; height: 100%; overflow: hidden; font-size: 11px; fill: #9c9c9c; stroke: none; min-width: 0; min-height: 0; }
.hruler { border: 1px solid #b0b0b0; border-right: 0; }
.vruler { border: 1px solid #b0b0b0; border-bottom: 0; }
.hruler path, .vruler path { stroke: #b0b0b0; fill: none; }
.view { position: relative; overflow: hidden; min-width: 0; min-height: 0; }
.page { position: absolute; left: 60px; top: 102px; width: 846px; height: 600px; background: #fff; border: 1px solid #000; }
.page canvas { position: absolute; outline: 1px solid #222; outline-offset: -1px; }
.f1, .f2, .f3 { top: 43px; }
.f4, .f5, .f6 { top: 307px; }
.f1, .f4 { left: 57px; }
.f2, .f5 { left: 324px; }
.f3, .f6 { left: 573px; }
.textel { position: absolute; left: 111px; top: 268px; width: 148px; height: 21px; border: 1px solid #333; color: #111; text-align: center; line-height: 15px; }
.h { position: absolute; width: 7px; height: 7px; background: #fff; border: 1px solid #333; }
.nw, .w, .sw { left: -4px; }
.ne, .e, .se { right: -4px; }
.n, .so { left: 70px; }
.nw, .n, .ne { top: -4px; }
.w, .e { top: 6px; }
.sw, .so, .se { bottom: -4px; }
.nw { background: #333; }
.docbody > .vbar { width: 17px; }
.hbar { grid-column: 1 / 3; background: #2b2b2b; display: flex; align-items: center; padding: 0 6px 0 24px; }
.hbar b { height: 9px; width: 52%; margin-left: 23%; border-radius: 5px; background: #686868; }
.hbar .left { transform: rotate(90deg); }
.hbar .right { margin-left: auto; transform: rotate(-90deg); }
.status { height: 25px; display: flex; align-items: center; gap: 4px; padding: 0 21px 0 25px; background: var(--bg); border: 1px solid #5a5c66; border-top: 0; }
.bar { width: 1px; height: 16px; background: #a0a0a0; margin: 0 1px; }
.status select { height: 21px; }
.scale { width: 100px; }
.status .zoom { width: 46px; border: 0; margin-left: 3px; }
.guides { width: 20px; height: 20px; background: #0f5fa8; }
.coord { flex: 1; text-align: center; padding-left: 10px; }
.selcount { display: flex; align-items: center; gap: 2px; height: 21px; padding: 0 1px; background: #262626; white-space: nowrap; }
.pause { padding: 0 3px; }

.side { width: 518px; flex: none; display: flex; flex-direction: column; }
.element { flex: 1; border-color: var(--blue); margin-bottom: -1px; }
.element h2 { color: #2f97ea; }
.titlerow { display: flex; align-items: flex-start; height: 25px; padding: 0 18px 0 6px; }
.titlerow button { margin-top: 3px; }
.titlerow h3 { flex: 1; text-align: center; font-size: 14px; line-height: 14px; }
.subtabs { display: flex; align-items: center; height: 24px; padding-left: 7px; font-size: 13px; line-height: 20px; }
.subtabs .c { width: 9px; height: 6px; margin: 4px 16px 0 12px; color: #fff; }
.subtabs .on { border-bottom: 2px solid var(--blue); font-weight: 500; padding-top: 2px; color: #e4e4e4; }
.propbox { height: 339px; display: flex; margin: 5px 6px 0 0; }
.props { flex: 1; overflow: hidden; }
.p { display: flex; align-items: center; justify-content: space-between; }
.h22 { height: 22px; } .h23 { height: 23px; } .h24 { height: 24px; } .h25 { height: 25px; } .h28 { height: 28px; } .h30 { height: 30px; } .h31 { height: 31px; }
.in1 { padding-left: 30px; } .in2 { padding-left: 38px; } .in3 { padding-left: 46px; }
.dd { width: 75px; height: 24px; }
.dd.cut { align-self: flex-start; border-top: 0; margin-right: 2px; padding-left: 5px; }
.dd.size { width: 60px; height: 22px; background-image: var(--down); }
.fill, .color { border: 1px solid var(--line); background: #282828 var(--drop) no-repeat right 4px center; justify-content: flex-start; padding: 2px; }
.fill { width: 72px; height: 22px; }
.fill b { width: 48px; height: 18px; background: #000; }
.color { width: 36px; height: 24px; }
.color b { width: 18px; height: 18px; border: 1px solid #777; background: #000; }
.spin { display: flex; width: 80px; height: 24px; border: 1px solid var(--line); background: var(--field); padding: 0 5px 0 4px; }
.spin input { flex: 1; min-width: 0; padding: 0; border: 0; background: none; color: #eee; }
.spin div { display: flex; flex-direction: column; justify-content: space-between; padding: 3px 0; }
.chk { display: flex; align-items: center; gap: 4px; }
.chk input { border-radius: 0; }
.sec { justify-content: flex-start; gap: 4px; padding-left: 18px; font-size: 13px; }
.sec .c { width: 9px; height: 6px; }
.al { display: grid; grid-template-columns: repeat(4, 20px); height: 15px; }
.al button { width: 14px; justify-self: center; }
.al svg { width: 12px; height: 12px; }
.al .on { background: #1c4f7a; }
.al.va svg { width: 16px; height: 16px; }
.dim { color: #8c8c8c; }
.propbox .vbar { width: 17px; }
.splitter { height: 9px; margin: 9px 6px 16px 12px; border: solid #616161; border-width: 2px 0; display: flex; justify-content: center; align-items: center; gap: 1px; }
.splitter i { width: 5px; height: 4px; border-radius: 2px; background: #6a6a6a; }
.preview { flex: 1; margin: 0 6px 0 12px; border: 1px solid #999; background: #eaeaea; color: #111; font-size: 14px; display: flex; align-items: center; justify-content: center; padding-bottom: 18px; }
.ptools { display: flex; justify-content: center; gap: 6px; padding: 5px 0 0 5px; }
.pct { width: 60px; background-image: var(--down); }
.dot { width: 38px; height: 24px; border: 1px solid var(--line); background: var(--field); }
.dot i { width: 7px; height: 7px; border-radius: 4px; background: #909090; margin: auto; }
.dot span { width: 11px; height: 22px; background: #44474f; display: grid; place-items: center; }
.eye { width: 24px; height: 24px; background: #262626; }
.actions { display: flex; justify-content: flex-end; gap: 10px; padding: 5px 14px 15px 0; }
.actions button { height: 24px; padding: 0 10px; border: 1px solid #666; color: #7c7c7c; }
.dock { height: 21px; display: grid; grid-template-columns: 53px 93px 86px 88px 50px 1fr 55px; padding-left: 6px; line-height: 22px; }
.dock .on { border: 1px solid var(--blue); border-top-color: var(--bg); border-radius: 0 0 3px 3px; background: var(--bg); color: #1ba1f2; text-align: center; line-height: 20px; }
```
FILE: app.js
```js
// Rulers: 50 units are 142.2 px on screen at the current zoom.
const UNIT = 142.2 / 50;
const NS = 'http://www.w3.org/2000/svg';

function label(svg, text, x, y, turned) {
  const t = document.createElementNS(NS, 'text');
  t.textContent = text;
  if (turned) t.setAttribute('transform', `translate(${x} ${y}) rotate(-90)`);
  else { t.setAttribute('x', x); t.setAttribute('y', y); }
  svg.append(t);
}

function ruler(id, origin, dir, vertical) {
  const svg = document.getElementById(id);
  let d = '';
  for (let v = -60; v <= 400; v += 5) {
    const p = Math.round(origin + dir * v * UNIT) + 0.5;
    if (p < 0) continue;
    const major = v % 50 === 0 && v >= 0;
    if (vertical) d += `M${major ? 0 : 11} ${p}H19`;
    else d += `M${p} ${major ? 0 : 11}V19`;
    if (major && v > 0 && vertical) label(svg, v, 9, p - 4, true);
    if (major && !vertical) label(svg, v, p + 4, 9, false);
  }
  const path = document.createElementNS(NS, 'path');
  path.setAttribute('d', d);
  svg.append(path);
  const cursor = document.createElementNS(NS, 'path');
  const c = Math.round(origin + dir * (vertical ? 121.4 : 296) * UNIT) + 0.5;
  cursor.setAttribute('d', vertical ? `M0 ${c}H19` : `M${c} 0V19`);
  cursor.setAttribute('stroke-dasharray', '1 1');
  svg.append(cursor);
}
ruler('hruler', 60, 1, false);
ruler('vruler', 700, -1, true);

// Satellite scene, drawn in a 700 x 640 space.
function rng(seed) {
  return () => {
    seed = (seed + 0x6D2B79F5) | 0;
    let t = Math.imul(seed ^ (seed >>> 15), 1 | seed);
    t = (t + Math.imul(t ^ (t >>> 7), 61 | t)) ^ t;
    return ((t ^ (t >>> 14)) >>> 0) / 4294967296;
  };
}

const fields = [
  ['#5c5c5c', [85,0, 275,0, 280,40, 310,85, 305,125, 340,155, 400,232, 365,235, 290,205, 235,185, 215,182, 175,152, 135,155, 120,90, 85,75]],
  ['#404040', [155,85, 190,80, 210,100, 175,112]],
  ['#484848', [130,120, 200,110, 230,170, 180,150]],
  ['#424242', [50,160, 95,175, 100,215, 55,218]],
  ['#606060', [255,270, 290,250, 315,265, 355,240, 385,260, 388,415, 280,418, 265,430, 215,415, 185,395, 175,345, 120,330, 185,320, 250,295]],
  ['#484848', [260,325, 330,305, 325,320, 265,330]],
  ['#4c4c4c', [320,365, 380,360, 385,410, 340,405]],
  ['#555555', [390,250, 415,250, 430,300, 440,350, 390,360]],
  ['#1e1e1e', [388,290, 418,290, 420,330, 390,330]],
  ['#5c5c5c', [440,310, 480,275, 550,280, 600,300, 590,350, 580,380, 520,405, 470,385, 440,345]],
  ['#444444', [450,280, 520,275, 560,290, 470,300]],
  ['#4c4c4c', [280,415, 370,415, 385,440, 360,452, 280,450]],
  ['#b4b4b4', [395,450, 455,435, 450,480, 445,515, 405,485]],
  ['#585858', [448,460, 510,470, 530,530, 620,560, 635,640, 460,640, 445,520]],
  ['#666666', [45,330, 103,318, 100,372, 45,380]],
  ['#606060', [5,385, 165,402, 163,435, 100,432, 90,415, 30,430, 5,405]],
  ['#5a5a5a', [45,435, 85,432, 80,478, 48,472]],
  ['#6c6c6c', [55,500, 135,495, 150,508, 210,522, 265,480, 215,530, 205,590, 135,605, 75,575]],
  ['#c8c8c8', [420,98, 470,88, 488,105, 523,120, 520,135, 465,153, 430,143]],
  ['#101010', [365,150, 385,122, 400,132, 395,170, 375,172]],
  ['#1a1a1a', [275,460, 350,455, 390,480, 440,520, 450,600, 300,630, 255,600, 250,510]]
];
const roads = [
  ['#787878', 6, [12,0, 60,110, 105,205, 150,310, 175,345]],
  ['#808080', 6, [120,90, 150,200, 175,320, 215,495, 247,640]],
  ['#747474', 5, [145,210, 215,223, 405,240]],
  ['#8a8a8a', 6, [405,238, 560,247, 695,260]],
  ['#a8a8a8', 5, [418,0, 412,105]],
  ['#6c6c6c', 5, [570,0, 558,245, 562,275, 592,310, 588,370, 540,415, 470,445]],
  ['#707070', 4, [558,245, 610,190, 660,150, 665,120, 695,120]],
  ['#b0b0b0', 4, [195,5, 240,65, 310,140, 360,205, 405,245, 430,285, 445,345, 495,405, 510,440, 525,530, 540,640]],
  ['#9c9c9c', 10, [300,125, 335,155]],
  ['#c0c0c0', 12, [342,160, 372,188]],
  ['#989898', 4, [340,160, 380,115, 420,112]],
  ['#848484', 4, [400,365, 430,445, 460,530, 460,640]],
  ['#686868', 4, [270,425, 268,480, 210,522]],
  ['#484848', 3, [105,205, 150,350, 190,430]]
];
const towns = [
  [90,0,150,90,140], [180,40,90,120,130], [45,318,60,60,60], [10,390,155,40,120], [45,435,40,40,30],
  [60,495,150,60,130], [450,300,130,90,220], [250,350,60,70,90], [420,90,100,60,90],
  [490,560,130,75,180], [290,120,90,90,80], [400,440,60,60,50], [370,240,50,120,90], [460,480,60,140,70]
];

function scene(w, h) {
  const cv = document.createElement('canvas');
  cv.width = w; cv.height = h;
  const g = cv.getContext('2d', { willReadFrequently: true });
  const rand = rng(77);
  g.scale(w / 700, h / 640);
  g.fillStyle = '#262626';
  g.fillRect(0, 0, 700, 640);
  const mottle = (n, low, span, alpha) => {
    for (let i = 0; i < n; i++) {
      const v = low + rand() * span | 0;
      g.fillStyle = `rgba(${v},${v},${v},${alpha})`;
      g.beginPath();
      g.ellipse(rand() * 700, rand() * 640, 3 + rand() * 20, 3 + rand() * 14, rand() * 3, 0, 7);
      g.fill();
    }
  };
  mottle(1800, 14, 52, .4);
  const trace = p => {
    g.beginPath();
    for (let i = 0; i < p.length; i += 2) g.lineTo(p[i], p[i + 1]);
  };
  for (const [c, p] of fields) {
    g.fillStyle = c;
    const q = [];
    for (let i = 0; i < p.length; i += 2) {
      const nx = p[(i + 2) % p.length], ny = p[(i + 3) % p.length];
      for (let k = 0; k < 4; k++) {
        q.push(p[i] + (nx - p[i]) * k / 4 + (rand() - .5) * 11, p[i + 1] + (ny - p[i + 1]) * k / 4 + (rand() - .5) * 11);
      }
    }
    trace(q);
    g.fill();
  }
  mottle(900, 20, 100, .1);
  for (const [x, y, tw, th, n] of towns) {
    for (let i = 0; i < n; i++) {
      const a = rand() * 6.3, r = Math.sqrt(rand()) / 2;
      const v = rand() > .35 ? 130 + rand() * 110 | 0 : 40;
      g.fillStyle = `rgba(${v},${v},${v},.5)`;
      g.fillRect(x + tw / 2 + Math.cos(a) * r * tw, y + th / 2 + Math.sin(a) * r * th, 3 + rand() * 6, 3 + rand() * 6);
    }
  }
  g.lineJoin = 'round';
  for (const [c, lw, p] of roads) {
    g.strokeStyle = c; g.lineWidth = lw;
    trace(p); g.stroke();
  }
  const px = g.getImageData(0, 0, w, h).data;
  const out = new Float32Array(w * h);
  for (let i = 0; i < out.length; i++) out[i] = px[i * 4] * (0.92 + rand() * .16) + (rand() - .5) * 12;
  return out;
}

function paint(selector, mode) {
  const cv = document.querySelector(selector);
  const w = cv.width, h = cv.height;
  const s = scene(w, h);
  const at = (x, y) => s[Math.min(h - 1, Math.max(0, y)) * w + Math.min(w - 1, Math.max(0, x))];
  const g = cv.getContext('2d');
  const img = g.createImageData(w, h);
  const rand = rng(5);
  const cells = w * Math.ceil(h / 4);
  const dash = [0, 1, 2, 3].map(() => new Float32Array(cells).map(() => rand()));
  for (let y = 0; y < h; y++) for (let x = 0; x < w; x++) {
    const i = (y * w + x) * 4, v = at(x, y);
    const edge = v * 4 - at(x - 1, y) - at(x + 1, y) - at(x, y - 1) - at(x, y + 1);
    let c;
    if (mode === 'plain') c = [v, v, v];
    else if (mode === 'sharp') { const k = v * 1.1 - 4 + edge * .45; c = [k, k, k]; }
    else if (mode === 'strong') { const k = v * 1.1 + 24 + edge * 2.2; c = [k, k, k]; }
    else {
      let gx = 0;
      for (let k = -1; k <= 1; k++) gx += at(x, y + k) - at(x - 1, y + k);
      gx /= 3;
      const [n, r, q, b] = dash.map(a => a[(y >> 2) * w + x]);
      const k = Math.min(230, Math.max(0, gx - 11) * 9) * (n > .2 ? 1 : .4);
      const speck = n > .86 ? 130 * b * b : 0;
      c = [k * (r > .2 ? .85 : .35), k * (q > .2 ? .88 : .45), k * (b > .25 ? 1 : .4) + speck];
    }
    img.data[i] = c[0]; img.data[i + 1] = c[1]; img.data[i + 2] = c[2]; img.data[i + 3] = 255;
  }
  g.putImageData(img, 0, 0);
}
paint('.f1', 'plain');
paint('.f2', 'sharp');
paint('.f3', 'plain');
paint('.f4', 'strong');
paint('.f5', 'edges');
paint('.f6', 'edges');
```
